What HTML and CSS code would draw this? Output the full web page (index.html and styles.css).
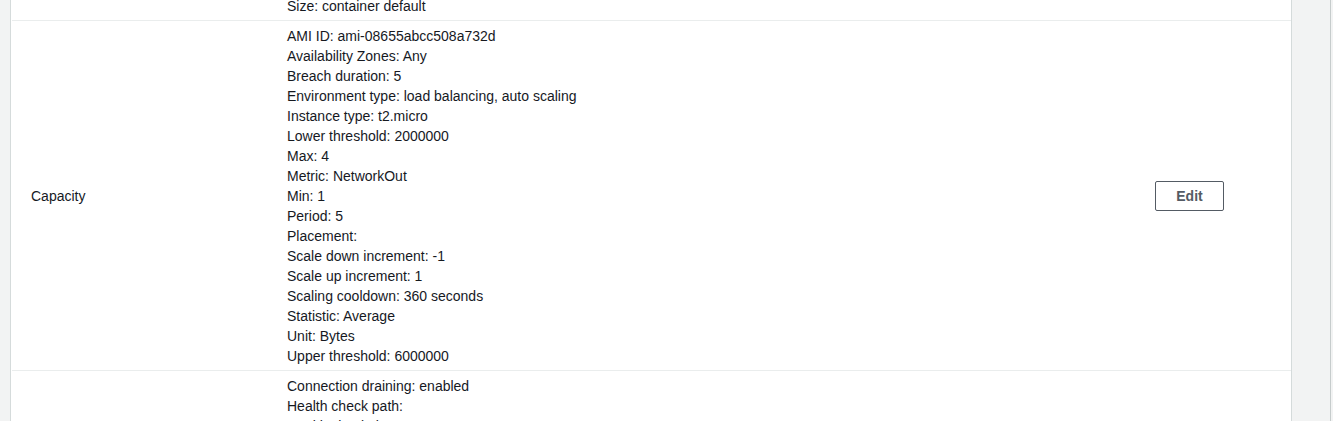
FILE: index.html
```html
<!DOCTYPE html>
<html>
<head>
<meta charset="utf-8">
<link rel="stylesheet" href="styles.css">
</head>
<body>
<div class="page">
  <div class="panel">
    <div class="row row-top">
      <div class="label"></div>
      <div class="values">
        <div>Size: container default</div>
      </div>
      <div class="action"></div>
    </div>
    <div class="row">
      <div class="label">Capacity</div>
      <div class="values">
        <div>AMI ID: ami-08655abcc508a732d</div>
        <div>Availability Zones: Any</div>
        <div>Breach duration: 5</div>
        <div>Environment type: load balancing, auto scaling</div>
        <div>Instance type: t2.micro</div>
        <div>Lower threshold: 2000000</div>
        <div>Max: 4</div>
        <div>Metric: NetworkOut</div>
        <div>Min: 1</div>
        <div>Period: 5</div>
        <div>Placement:</div>
        <div>Scale down increment: -1</div>
        <div>Scale up increment: 1</div>
        <div>Scaling cooldown: 360 seconds</div>
        <div>Statistic: Average</div>
        <div>Unit: Bytes</div>
        <div>Upper threshold: 6000000</div>
      </div>
      <div class="action"><button class="btn">Edit</button></div>
    </div>
    <div class="row row-last">
      <div class="label"></div>
      <div class="values">
        <div>Connection draining: enabled</div>
        <div>Health check path:</div>
        <div>Health check timeout: 5</div>
      </div>
      <div class="action"></div>
    </div>
  </div>
  <div class="rail"></div>
</div>
</body>
</html>
```

FILE: styles.css
```css
html, body {
  margin: 0;
  padding: 0;
  height: 100%;
  overflow: hidden;
  background: #f2f3f3;
}
body {
  font-family: "Liberation Sans", Arial, Helvetica, sans-serif;
  font-size: 14px;
  color: #16191f;
}
.page {
  display: flex;
  height: 421px;
  padding-left: 10px;
  box-sizing: border-box;
}
.panel {
  width: 1280px;
  background: #fff;
  border-left: 1px solid #d5dbdb;
  border-right: 1px solid #d5dbdb;
  display: flex;
  flex-direction: column;
  margin-top: -9px;
}
.rail {
  width: 38px;
  border-right: 1px solid #c6cccc;
}
.row {
  display: grid;
  grid-template-columns: 256px 1fr auto;
  align-items: center;
  padding: 5px 67px 4px 19px;
  border-bottom: 1px solid #eaeded;
  line-height: 20px;
  margin-left: 1px;
}
.row-last {
  border-bottom: none;
}
.values {
  align-self: start;
}
.btn {
  font-family: "Liberation Sans", Arial, Helvetica, sans-serif;
  font-size: 14px;
  font-weight: bold;
  color: #545b64;
  background: #fff;
  border: 1px solid #545b64;
  border-radius: 2px;
  width: 69px;
  height: 30px;
  padding: 0;
  cursor: pointer;
}
```
